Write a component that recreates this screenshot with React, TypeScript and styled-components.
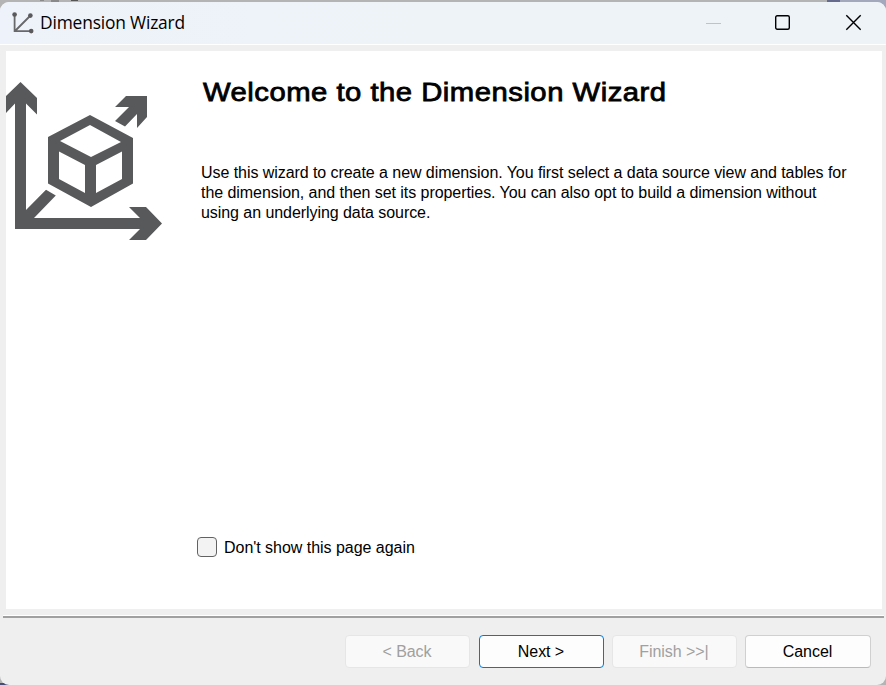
import React from 'react';
import styled, { createGlobalStyle } from 'styled-components';

const GlobalStyle = createGlobalStyle`
  html, body { margin: 0; padding: 0; overflow: hidden; }
  * { box-sizing: border-box; }
`;

const Desktop = styled.div`
  width: 886px;
  height: 685px;
  padding-top: 2px;
  background:
    linear-gradient(#666a8c, #666a8c) 827px 0 / 13px 2px no-repeat,
    linear-gradient(#a4a8bd, #a4a8bd) 840px 0 / 46px 12px no-repeat,
    linear-gradient(#474b78, #474b78) 0 683px / 12px 2px no-repeat,
    linear-gradient(#555, #555) 71px 0 / 7px 1px no-repeat,
    linear-gradient(#8a8a8a, #8a8a8a) 40px 0 / 4px 1px no-repeat,
    linear-gradient(#8a8a8a, #8a8a8a) 51px 0 / 8px 2px no-repeat,
    #b4b4b4;
  font-family: 'Liberation Sans', Arial, sans-serif;
  font-size: 16px;
  color: #000;
`;

const Dialog = styled.main`
  height: 683px;
  display: flex;
  flex-direction: column;
  border-radius: 9px;
  overflow: hidden;
  background: #efefef;
`;

const TitleBar = styled.header`
  height: 43px;
  flex: none;
  display: flex;
  align-items: center;
  padding-left: 12px;
  background: linear-gradient(90deg, #eef2fa, #edf3f8 30%, #edf3f7);
  border-bottom: 1px solid #fff;
`;

const WindowTitle = styled.span`
  flex: 1;
  margin-left: 6px;
  padding-bottom: 2px;
  font: 17.4px/24px 'Open Sans', 'Noto Sans', sans-serif;
  letter-spacing: -0.18px;
  white-space: nowrap;
`;

const Caption = styled.div`
  display: flex;
  gap: 54px;
  padding-right: 24px;
`;

const CaptionButton = styled.button`
  width: 16px;
  height: 42px;
  padding: 0;
  border: 0;
  background: none;
  display: grid;
  place-items: center;

  svg { overflow: visible; }
`;

const Page = styled.section`
  height: 558px;
  flex: none;
  margin: 6px 4px 0 6px;
  display: grid;
  grid-template-columns: 191px 1fr;
  background: #fff;
`;

const Artwork = styled.svg`
  display: block;
  margin-top: 29px;
`;

const Content = styled.div`
  display: flex;
  flex-direction: column;
`;

const Heading = styled.h1`
  margin: 25px 0 1px 6px;
  font-size: 26.6px;
  line-height: 32px;
  font-weight: 400;
  -webkit-text-stroke: 0.8px #000;
  letter-spacing: 0.45px;
  transform: scaleX(1.1);
  transform-origin: left;
  white-space: nowrap;
`;

const Description = styled.p`
  margin: 54px 0 0 4px;
  line-height: 20px;
  letter-spacing: -0.06px;
  white-space: nowrap;
`;

const CheckLabel = styled.label`
  display: flex;
  align-items: center;
  gap: 7px;
  height: 20px;
  margin-top: 314px;
  letter-spacing: -0.03px;
  white-space: nowrap;
`;

const CheckText = styled.span`
  padding-top: 2px;
`;

const CheckBox = styled.input`
  appearance: none;
  width: 20px;
  height: 20px;
  margin: 0;
  border: 1px solid #626262;
  border-radius: 4px;
  background: #f3f3f3;
`;

const Rule = styled.div`
  height: 3px;
  flex: none;
  margin: 6px 2px 0 3px;
  background: #a0a0a0;
  border-top: 1px solid #fff;
`;

const Footer = styled.footer`
  display: flex;
  justify-content: flex-end;
  padding: 17px 15px 0 0;
`;

const WizardButton = styled.button<{ $primary?: boolean; $width?: number; $gap?: number }>`
  width: ${p => p.$width ?? 125}px;
  height: 33px;
  padding: 0 1px 0 0;
  margin-left: ${p => p.$gap ?? 8}px;
  border: 1px solid ${p => (p.$primary ? '#0078d4' : '#d0d0d0')};
  border-bottom-color: ${p => (p.$primary ? '#0078d4' : '#bababa')};
  border-radius: 4px;
  background: #fdfdfd;
  color: #000;
  font: 16px/20px 'Liberation Sans', Arial, sans-serif;
  letter-spacing: -0.06px;

  &:disabled {
    border-color: #e6e6e6;
    background: #f9f9f9;
    color: #a0a0a0;
  }
`;

function AxesIcon() {
  return (
    <svg width="22" height="22" viewBox="0 0 22 22" fill="none" stroke="#68686a" strokeWidth="1.8">
      <path d="M2.6 2.5V19.1H19M3 19L18.5 3.5" />
      <g fill="#5a5a5c" stroke="none">
        <circle cx="2.6" cy="2.5" r="2.3" />
        <circle cx="18.4" cy="3.6" r="2.3" />
        <circle cx="19.2" cy="19.1" r="2.3" />
      </g>
    </svg>
  );
}

function DimensionArtwork() {
  return (
    <Artwork width="160" height="164" viewBox="6 80 160 164" fill="#58595b">
      <path d="M20.5 82L37 98V114.5L26 103.5V210L46 189.7L55.8 195.5L34 218H140L129 207H146L162 223.5L146 240H129L140 229H15V103.5L6 113V96Z" />
      <path d="M126 96H147V117L137 128V114L125 126.5L115 121L129 107H115Z" />
      <path
        fillRule="evenodd"
        d="M90 115L133 138V183.5L91 207L48 183.5V137ZM90 125L60 141L91 157L121 142ZM59 151.5V179L85 193V165ZM96 165V193L122 179V151.5Z"
      />
    </Artwork>
  );
}

export default function App() {
  return (
    <>
      <GlobalStyle />
      <Desktop>
        <Dialog>
          <TitleBar>
            <AxesIcon />
            <WindowTitle>Dimension Wizard</WindowTitle>
            <Caption>
              <CaptionButton aria-label="Minimize" disabled>
                <svg width="16" height="16"><path d="M0 8.5H15" stroke="#bfc3c7" /></svg>
              </CaptionButton>
              <CaptionButton aria-label="Maximize">
                <svg width="16" height="16" fill="none" stroke="#000" strokeWidth="1.4">
                  <rect x="-0.3" y="0.7" width="13.6" height="13.6" rx="1.5" />
                </svg>
              </CaptionButton>
              <CaptionButton aria-label="Close">
                <svg width="16" height="16" fill="none" stroke="#000" strokeWidth="1.4">
                  <path d="M0.3 0.3L14.7 14.7M14.7 0.3L0.3 14.7" />
                </svg>
              </CaptionButton>
            </Caption>
          </TitleBar>
          <Page>
            <DimensionArtwork />
            <Content>
              <Heading>Welcome to the Dimension Wizard</Heading>
              <Description>
                Use this wizard to create a new dimension. You first select a data source view and tables for
                <br />
                the dimension, and then set its properties. You can also opt to build a dimension without
                <br />
                using an underlying data source.
              </Description>
              <CheckLabel>
                <CheckBox type="checkbox" />
                <CheckText>Don't show this page again</CheckText>
              </CheckLabel>
            </Content>
          </Page>
          <Rule />
          <Footer>
            <WizardButton disabled>&lt; Back</WizardButton>
            <WizardButton $primary $gap={9}>Next &gt;</WizardButton>
            <WizardButton disabled>Finish &gt;&gt;|</WizardButton>
            <WizardButton $width={126}>Cancel</WizardButton>
          </Footer>
        </Dialog>
      </Desktop>
    </>
  );
}
